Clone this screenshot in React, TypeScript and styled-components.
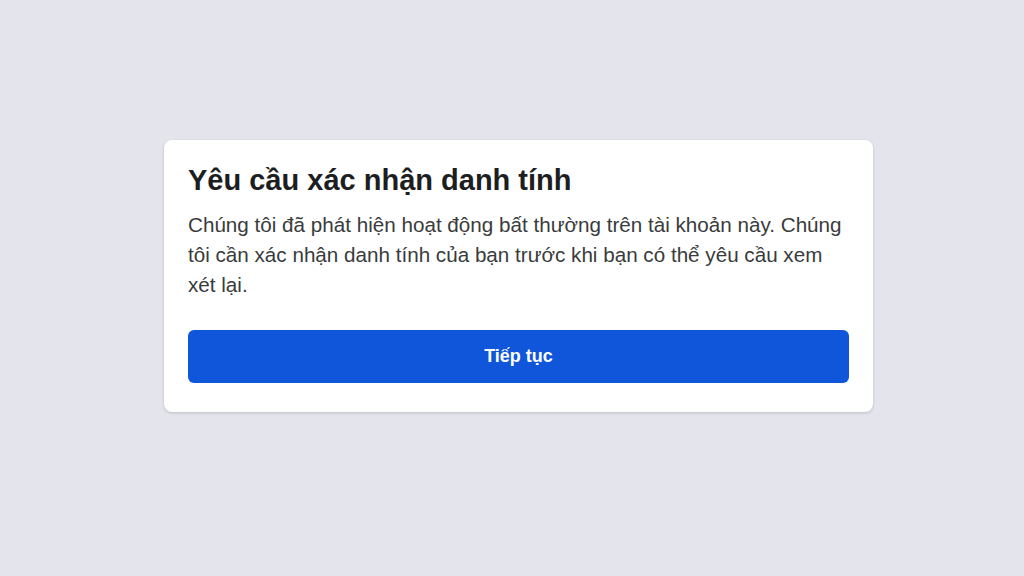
import React from 'react';
import styled, { createGlobalStyle } from 'styled-components';

const GlobalStyle = createGlobalStyle`
  html, body {
    margin: 0;
    padding: 0;
    background-color: #e4e5ec;
    font-family: 'Liberation Sans', Arial, sans-serif;
  }
`;

const Page = styled.div`
  width: 1024px;
  height: 576px;
  display: flex;
  justify-content: flex-start;
  padding: 140px 0 0 164px;
  box-sizing: border-box;
`;

const Card = styled.div`
  width: 709px;
  height: 272px;
  box-sizing: border-box;
  padding: 22px 24px 29px 24px;
  background-color: #ffffff;
  border-radius: 8px;
  box-shadow: 0 1px 3px rgba(0, 0, 0, 0.18);
  display: flex;
  flex-direction: column;
`;

const Title = styled.h1`
  margin: 0 0 12px 0;
  font-size: 29px;
  line-height: 36px;
  font-weight: 700;
  color: #1c1e21;
`;

const Body = styled.p`
  margin: 0;
  font-size: 20.65px;
  line-height: 30px;
  color: #3a3b3c;
`;

const Button = styled.button`
  margin-top: 30px;
  height: 53px;
  width: 100%;
  border: none;
  border-radius: 6px;
  background-color: #0f56da;
  color: #ffffff;
  font-family: 'Liberation Sans', Arial, sans-serif;
  font-size: 18px;
  font-weight: 700;
  cursor: pointer;
`;

export default function App() {
  return (
    <>
      <GlobalStyle />
      <Page>
        <Card>
          <Title>Yêu cầu xác nhận danh tính</Title>
          <Body>
            Chúng tôi đã phát hiện hoạt động bất thường trên tài khoản này. Chúng
            tôi cần xác nhận danh tính của bạn trước khi bạn có thể yêu cầu xem
            xét lại.
          </Body>
          <Button>Tiếp tục</Button>
        </Card>
      </Page>
    </>
  );
}
